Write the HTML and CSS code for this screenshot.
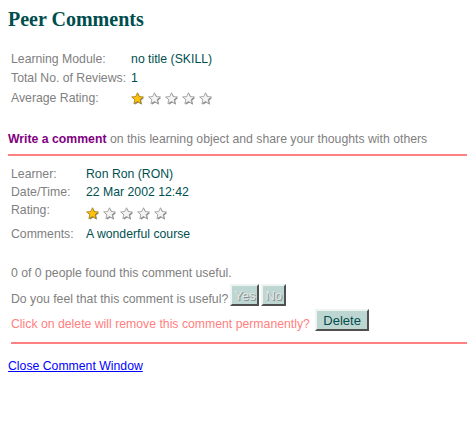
FILE: index.html
```html
<!DOCTYPE html>
<html lang="en">
<head>
    <meta charset="UTF-8">
    <title>Peer Comments</title>
    <link rel="stylesheet" href="styles.css">
</head>
<body>
    <h1 class="title">Peer Comments</h1>

    <table class="info">
        <tr><td class="label">Learning Module:</td><td class="value">no title (SKILL)</td></tr>
        <tr><td class="label">Total No. of Reviews:</td><td class="value">1</td></tr>
        <tr class="rate"><td class="label">Average Rating:</td><td class="value">
            <span class="stars">
                <svg class="star" viewBox="0 0 14 14"><path class="shade" d="M7 .8l1.9 4.1 4.4.4-3.4 2.9 1 4.4L7 10.3l-3.9 2.3 1-4.4L.7 5.3l4.4-.4z"/><path class="on" d="M7 .8l1.9 4.1 4.4.4-3.4 2.9 1 4.4L7 10.3l-3.9 2.3 1-4.4L.7 5.3l4.4-.4z"/></svg>
                <svg class="star" viewBox="0 0 14 14"><path class="shade" d="M7 .8l1.9 4.1 4.4.4-3.4 2.9 1 4.4L7 10.3l-3.9 2.3 1-4.4L.7 5.3l4.4-.4z"/><path class="off" d="M7 .8l1.9 4.1 4.4.4-3.4 2.9 1 4.4L7 10.3l-3.9 2.3 1-4.4L.7 5.3l4.4-.4z"/></svg>
                <svg class="star" viewBox="0 0 14 14"><path class="shade" d="M7 .8l1.9 4.1 4.4.4-3.4 2.9 1 4.4L7 10.3l-3.9 2.3 1-4.4L.7 5.3l4.4-.4z"/><path class="off" d="M7 .8l1.9 4.1 4.4.4-3.4 2.9 1 4.4L7 10.3l-3.9 2.3 1-4.4L.7 5.3l4.4-.4z"/></svg>
                <svg class="star" viewBox="0 0 14 14"><path class="shade" d="M7 .8l1.9 4.1 4.4.4-3.4 2.9 1 4.4L7 10.3l-3.9 2.3 1-4.4L.7 5.3l4.4-.4z"/><path class="off" d="M7 .8l1.9 4.1 4.4.4-3.4 2.9 1 4.4L7 10.3l-3.9 2.3 1-4.4L.7 5.3l4.4-.4z"/></svg>
                <svg class="star" viewBox="0 0 14 14"><path class="shade" d="M7 .8l1.9 4.1 4.4.4-3.4 2.9 1 4.4L7 10.3l-3.9 2.3 1-4.4L.7 5.3l4.4-.4z"/><path class="off" d="M7 .8l1.9 4.1 4.4.4-3.4 2.9 1 4.4L7 10.3l-3.9 2.3 1-4.4L.7 5.3l4.4-.4z"/></svg>
            </span>
        </td></tr>
    </table>

    <p class="write"><a href="javascript:;" class="write-link">Write a comment</a> on this learning object and share your thoughts with others</p>
    <div class="rule"></div>

    <div class="comment">
        <table class="info detail">
            <tr><td class="label">Learner:</td><td class="value">Ron Ron (RON)</td></tr>
            <tr><td class="label">Date/Time:</td><td class="value">22 Mar 2002 12:42</td></tr>
            <tr class="rate"><td class="label">Rating:</td><td class="value">
                <span class="stars">
                    <svg class="star" viewBox="0 0 14 14"><path class="shade" d="M7 .8l1.9 4.1 4.4.4-3.4 2.9 1 4.4L7 10.3l-3.9 2.3 1-4.4L.7 5.3l4.4-.4z"/><path class="on" d="M7 .8l1.9 4.1 4.4.4-3.4 2.9 1 4.4L7 10.3l-3.9 2.3 1-4.4L.7 5.3l4.4-.4z"/></svg>
                    <svg class="star" viewBox="0 0 14 14"><path class="shade" d="M7 .8l1.9 4.1 4.4.4-3.4 2.9 1 4.4L7 10.3l-3.9 2.3 1-4.4L.7 5.3l4.4-.4z"/><path class="off" d="M7 .8l1.9 4.1 4.4.4-3.4 2.9 1 4.4L7 10.3l-3.9 2.3 1-4.4L.7 5.3l4.4-.4z"/></svg>
                    <svg class="star" viewBox="0 0 14 14"><path class="shade" d="M7 .8l1.9 4.1 4.4.4-3.4 2.9 1 4.4L7 10.3l-3.9 2.3 1-4.4L.7 5.3l4.4-.4z"/><path class="off" d="M7 .8l1.9 4.1 4.4.4-3.4 2.9 1 4.4L7 10.3l-3.9 2.3 1-4.4L.7 5.3l4.4-.4z"/></svg>
                    <svg class="star" viewBox="0 0 14 14"><path class="shade" d="M7 .8l1.9 4.1 4.4.4-3.4 2.9 1 4.4L7 10.3l-3.9 2.3 1-4.4L.7 5.3l4.4-.4z"/><path class="off" d="M7 .8l1.9 4.1 4.4.4-3.4 2.9 1 4.4L7 10.3l-3.9 2.3 1-4.4L.7 5.3l4.4-.4z"/></svg>
                    <svg class="star" viewBox="0 0 14 14"><path class="shade" d="M7 .8l1.9 4.1 4.4.4-3.4 2.9 1 4.4L7 10.3l-3.9 2.3 1-4.4L.7 5.3l4.4-.4z"/><path class="off" d="M7 .8l1.9 4.1 4.4.4-3.4 2.9 1 4.4L7 10.3l-3.9 2.3 1-4.4L.7 5.3l4.4-.4z"/></svg>
                </span>
            </td></tr>
            <tr><td class="label">Comments:</td><td class="value">A wonderful course</td></tr>
        </table>

        <p class="useful">0 of 0 people found this comment useful.</p>
        <p class="ask">Do you feel that this comment is useful?<button class="btn dim">Yes</button><button class="btn dim">No</button></p>
        <p class="warn">Click on delete will remove this comment permanently? <button class="btn del">Delete</button></p>
        <div class="rule end"></div>
    </div>

    <p class="close"><a href="javascript:;">Close Comment Window</a></p>
</body>
</html>
```

FILE: styles.css
```css
body{
    margin:8px 0 8px 8px;
    font-family:"Liberation Sans", Arial, sans-serif;
    font-size:12.25px;
    color:#808080;
}
.title{
    margin:0;
    font-family:"Liberation Serif", "Times New Roman", serif;
    font-size:20px;
    font-weight:bold;
    color:#004d4d;
}
.info{
    border-collapse:collapse;
    margin:18px 0 0 3px;
}
.info td{ padding:0; height:19px; vertical-align:middle; }
.info .label{ color:#808080; padding-right:5px; }
.info .value{ color:#005050; }
.info .rate td{ height:22px; }
.stars{ display:flex; gap:4px; }
.star{ width:13px; height:13px; overflow:visible; }
.star .shade{ fill:#8a8a8a; transform:translate(1px,1px); }
.star .on{ fill:#ffc20e; stroke:#9a7400; stroke-width:.8; }
.star .off{ fill:#f4f4f4; stroke:#8c8c8c; stroke-width:.8; }

.write{ margin:23px 0 0; }
.write-link{ color:#800080; font-weight:bold; text-decoration:none; }
.rule{ height:2px; background:#ff8080; margin-top:8px; }
.rule.end{ margin-top:11px; }

.comment{ padding-left:3px; }
.detail{ margin:9px 0 0; }
.detail td{ height:18px; line-height:18px; }
.detail .label{ width:70px; }
.detail .rate td{ height:24px; }
.detail .rate .label{ vertical-align:top; }

.useful{ margin:23px 0 0; }
.ask{ margin:4px 0 0; }
.warn{ margin:3px 0 0; color:#ff8080; }
.btn{
    font-family:"Liberation Sans", Arial, sans-serif;
    font-size:13px;
    line-height:15px;
    background:#bed6d2;
    border:2px solid;
    border-color:#eef4f2 #505050 #505050 #eef4f2;
    padding:2px 2px 1px;
    margin-left:2px;
    vertical-align:3px;
    color:#004d4d;
}
.btn.dim{ color:#e6e6e6; text-shadow:1px 1px 0 #7e8e8c; }
.btn.del{ padding:2px 6px 1px; }

.close{ margin:15px 0 0; }
.close a{ color:#0000ff; }
```
